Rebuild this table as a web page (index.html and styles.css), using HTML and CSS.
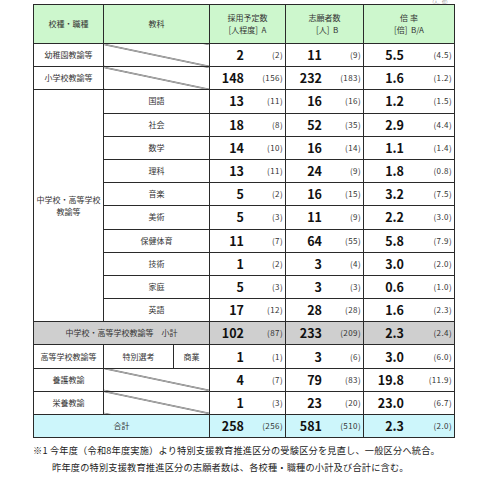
FILE: index.html
```html
<!DOCTYPE html>
<html lang="ja">
<head>
    <meta charset="UTF-8">
    <title>採用予定数・志願者数</title>
    <link rel="stylesheet" href="styles.css">
</head>
<body>
    <div class="page">
        <div class="unit"><span>（人、倍）</span></div>
        <table class="stats">
            <colgroup>
                <col class="w-kind">
                <col class="w-subj">
                <col class="w-sub2">
                <col class="w-a">
                <col class="w-b">
                <col class="w-c">
            </colgroup>
            <tr class="head">
                <th>校種・職種</th>
                <th colspan="2">教科</th>
                <th>採用予定数<br>[人程度]&nbsp; A</th>
                <th>志願者数<br>&nbsp;&nbsp;&nbsp;[人]&nbsp; B</th>
                <th>倍&nbsp;率<br>[倍]&nbsp; B/A</th>
            </tr>
            <tr>
                <td>幼稚園教諭等</td>
                <td colspan="2" class="diag"></td>
                <td class="v a"><div class="cell"><span class="n">2</span><span class="p">(2)</span></div></td>
                <td class="v b"><div class="cell"><span class="n">11</span><span class="p">(9)</span></div></td>
                <td class="v c"><div class="cell"><span class="n">5.5</span><span class="p">(4.5)</span></div></td>
            </tr>
            <tr>
                <td>小学校教諭等</td>
                <td colspan="2" class="diag"></td>
                <td class="v a"><div class="cell"><span class="n">148</span><span class="p">(156)</span></div></td>
                <td class="v b"><div class="cell"><span class="n">232</span><span class="p">(183)</span></div></td>
                <td class="v c"><div class="cell"><span class="n">1.6</span><span class="p">(1.2)</span></div></td>
            </tr>
            <tr>
                <td rowspan="10">中学校・高等学校<br>教諭等</td>
                <td colspan="2">国語</td>
                <td class="v a"><div class="cell"><span class="n">13</span><span class="p">(11)</span></div></td>
                <td class="v b"><div class="cell"><span class="n">16</span><span class="p">(16)</span></div></td>
                <td class="v c"><div class="cell"><span class="n">1.2</span><span class="p">(1.5)</span></div></td>
            </tr>
            <tr>
                <td colspan="2">社会</td>
                <td class="v a"><div class="cell"><span class="n">18</span><span class="p">(8)</span></div></td>
                <td class="v b"><div class="cell"><span class="n">52</span><span class="p">(35)</span></div></td>
                <td class="v c"><div class="cell"><span class="n">2.9</span><span class="p">(4.4)</span></div></td>
            </tr>
            <tr>
                <td colspan="2">数学</td>
                <td class="v a"><div class="cell"><span class="n">14</span><span class="p">(10)</span></div></td>
                <td class="v b"><div class="cell"><span class="n">16</span><span class="p">(14)</span></div></td>
                <td class="v c"><div class="cell"><span class="n">1.1</span><span class="p">(1.4)</span></div></td>
            </tr>
            <tr>
                <td colspan="2">理科</td>
                <td class="v a"><div class="cell"><span class="n">13</span><span class="p">(11)</span></div></td>
                <td class="v b"><div class="cell"><span class="n">24</span><span class="p">(9)</span></div></td>
                <td class="v c"><div class="cell"><span class="n">1.8</span><span class="p">(0.8)</span></div></td>
            </tr>
            <tr>
                <td colspan="2">音楽</td>
                <td class="v a"><div class="cell"><span class="n">5</span><span class="p">(2)</span></div></td>
                <td class="v b"><div class="cell"><span class="n">16</span><span class="p">(15)</span></div></td>
                <td class="v c"><div class="cell"><span class="n">3.2</span><span class="p">(7.5)</span></div></td>
            </tr>
            <tr>
                <td colspan="2">美術</td>
                <td class="v a"><div class="cell"><span class="n">5</span><span class="p">(3)</span></div></td>
                <td class="v b"><div class="cell"><span class="n">11</span><span class="p">(9)</span></div></td>
                <td class="v c"><div class="cell"><span class="n">2.2</span><span class="p">(3.0)</span></div></td>
            </tr>
            <tr>
                <td colspan="2">保健体育</td>
                <td class="v a"><div class="cell"><span class="n">11</span><span class="p">(7)</span></div></td>
                <td class="v b"><div class="cell"><span class="n">64</span><span class="p">(55)</span></div></td>
                <td class="v c"><div class="cell"><span class="n">5.8</span><span class="p">(7.9)</span></div></td>
            </tr>
            <tr>
                <td colspan="2">技術</td>
                <td class="v a"><div class="cell"><span class="n">1</span><span class="p">(2)</span></div></td>
                <td class="v b"><div class="cell"><span class="n">3</span><span class="p">(4)</span></div></td>
                <td class="v c"><div class="cell"><span class="n">3.0</span><span class="p">(2.0)</span></div></td>
            </tr>
            <tr>
                <td colspan="2">家庭</td>
                <td class="v a"><div class="cell"><span class="n">5</span><span class="p">(3)</span></div></td>
                <td class="v b"><div class="cell"><span class="n">3</span><span class="p">(3)</span></div></td>
                <td class="v c"><div class="cell"><span class="n">0.6</span><span class="p">(1.0)</span></div></td>
            </tr>
            <tr>
                <td colspan="2">英語</td>
                <td class="v a"><div class="cell"><span class="n">17</span><span class="p">(12)</span></div></td>
                <td class="v b"><div class="cell"><span class="n">28</span><span class="p">(28)</span></div></td>
                <td class="v c"><div class="cell"><span class="n">1.6</span><span class="p">(2.3)</span></div></td>
            </tr>
            <tr class="subtotal">
                <td colspan="3">中学校・高等学校教諭等&emsp;小計</td>
                <td class="v a"><div class="cell"><span class="n">102</span><span class="p">(87)</span></div></td>
                <td class="v b"><div class="cell"><span class="n">233</span><span class="p">(209)</span></div></td>
                <td class="v c"><div class="cell"><span class="n">2.3</span><span class="p">(2.4)</span></div></td>
            </tr>
            <tr>
                <td>高等学校教諭等</td>
                <td>特別選考</td>
                <td>商業</td>
                <td class="v a"><div class="cell"><span class="n">1</span><span class="p">(1)</span></div></td>
                <td class="v b"><div class="cell"><span class="n">3</span><span class="p">(6)</span></div></td>
                <td class="v c"><div class="cell"><span class="n">3.0</span><span class="p">(6.0)</span></div></td>
            </tr>
            <tr>
                <td>養護教諭</td>
                <td colspan="2" class="diag"></td>
                <td class="v a"><div class="cell"><span class="n">4</span><span class="p">(7)</span></div></td>
                <td class="v b"><div class="cell"><span class="n">79</span><span class="p">(83)</span></div></td>
                <td class="v c"><div class="cell"><span class="n">19.8</span><span class="p">(11.9)</span></div></td>
            </tr>
            <tr>
                <td>栄養教諭</td>
                <td colspan="2" class="diag"></td>
                <td class="v a"><div class="cell"><span class="n">1</span><span class="p">(3)</span></div></td>
                <td class="v b"><div class="cell"><span class="n">23</span><span class="p">(20)</span></div></td>
                <td class="v c"><div class="cell"><span class="n">23.0</span><span class="p">(6.7)</span></div></td>
            </tr>
            <tr class="total">
                <td colspan="3">合計</td>
                <td class="v a"><div class="cell"><span class="n">258</span><span class="p">(256)</span></div></td>
                <td class="v b"><div class="cell"><span class="n">581</span><span class="p">(510)</span></div></td>
                <td class="v c"><div class="cell"><span class="n">2.3</span><span class="p">(2.0)</span></div></td>
            </tr>
        </table>

        <div class="notes">
            <p>※1 今年度（令和8年度実施）より特別支援教育推進区分の受験区分を見直し、一般区分へ統合。</p>
            <p class="indent">昨年度の特別支援教育推進区分の志願者数は、各校種・職種の小計及び合計に含む。</p>
        </div>
    </div>
</body>
</html>
```

FILE: styles.css
```css
body {
    margin: 0;
    background-color: #fff;
    font-family: "Noto Sans CJK JP", "Noto Sans", sans-serif;
    color: #333;
}

.page {
    padding-left: 33px;
    width: 421px;
}

.unit {
    height: 4px;
    display: flex;
    justify-content: flex-end;
    align-items: flex-end;
    padding-right: 4px;
}

.unit span {
    font-size: 4px;
    line-height: 4px;
    color: #888;
}

.stats {
    width: 421px;
    table-layout: fixed;
    border-collapse: collapse;
    font-size: 8px;
}

.w-kind { width: 70px; }
.w-subj { width: 70px; }
.w-sub2 { width: 36px; }
.w-a { width: 76px; }
.w-b { width: 78px; }
.w-c { width: 91px; }

th, td {
    border: 1px solid #2a2a2a;
    padding: 0;
    text-align: center;
    vertical-align: middle;
    line-height: 12px;
}

td {
    height: 22.2px;
}

.head th {
    height: 38px;
    background-color: #cdf7cd;
    font-weight: normal;
    color: #333;
}

.diag {
    background: linear-gradient(to top right, transparent calc(50% - 0.8px), #1a1a1a 50%, transparent calc(50% + 0.8px));
}

.subtotal td {
    background-color: #cfcfcf;
}

.total td {
    background-color: #cdf6fb;
}

.v {
    padding-right: 2px;
}

.cell {
    display: flex;
    align-items: center;
}

.n {
    display: inline-block;
    text-align: right;
    font-size: 12.5px;
    font-weight: 700;
    color: #111;
}

.a .n { width: 34px; }
.b .n { width: 36px; }
.c .n { width: 40px; }

.p {
    margin-left: auto;
    font-size: 8px;
    color: #333;
    letter-spacing: 0.4px;
}

.notes {
    margin-top: 4px;
    font-size: 9.2px;
    letter-spacing: 0.2px;
    color: #222;
    white-space: nowrap;
}

.notes p {
    margin: 0;
    line-height: 17px;
}

.notes .indent {
    padding-left: 19px;
}
```
